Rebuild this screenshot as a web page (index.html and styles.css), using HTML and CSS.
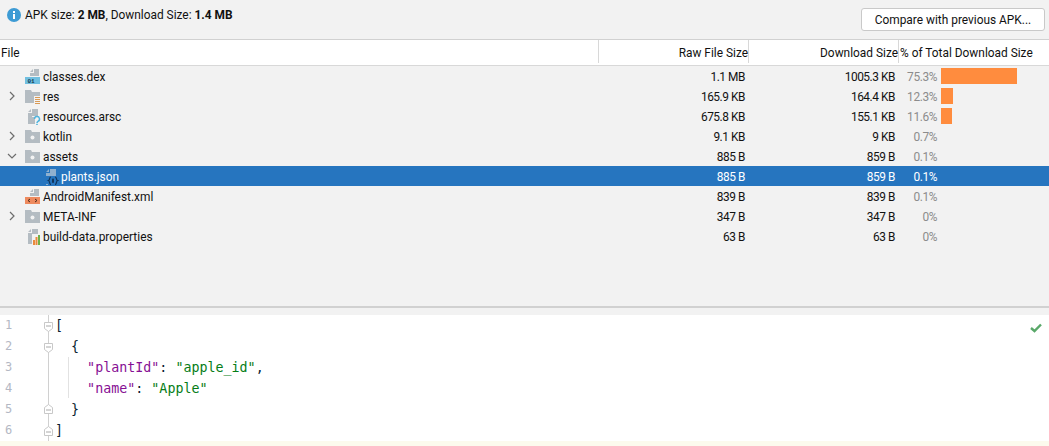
FILE: index.html
```html
<!DOCTYPE html>
<html lang="en">
<head>
<meta charset="utf-8">
<title>APK Analyzer</title>
<link rel="stylesheet" href="styles.css">
</head>
<body>
<svg class="defs" width="0" height="0">
  <defs>
    <g id="doc"><path d="M8 0v3H5zM9 0h5v7H9zM5 4h4v3H5z" fill="#b4bcc2"/></g>
    <g id="folder"><path d="M0 1h6l1 2h8v11H0z" fill="#b4bcc2"/></g>
    <symbol id="i-dex" viewBox="0 0 16 16"><use href="#doc"/><rect y="8" width="15" height="7" fill="#70bfe0"/><text x="2.500" y="14.300" class="glyph">01</text></symbol>
    <symbol id="i-res" viewBox="0 0 16 16"><use href="#folder"/><rect x="9" y="7" width="7" height="9" fill="#f2f2f2"/><path d="M10 8.500h5M10 10.500h5M10 12.500h5M10 14.500h5" stroke="#d99a55" stroke-width="1"/></symbol>
    <symbol id="i-arsc" viewBox="0 0 16 16"><path d="M6 0v3H3zM7 0h6v7H7zM3 4h4v4h3v7H3z" fill="#b4bcc2"/><path d="M9.500 10a2.500 2.500 0 1 1 3.500 2.300c-.8.400-1 .8-1 1.700" fill="none" stroke="#4fb3dd" stroke-width="1.500"/><rect x="11.200" y="14.800" width="1.600" height="1.600" fill="#4fb3dd"/></symbol>
    <symbol id="i-pkg" viewBox="0 0 16 16"><use href="#folder"/><circle cx="7.500" cy="8.500" r="2" fill="#f2f2f2"/></symbol>
    <symbol id="i-json" viewBox="0 0 16 16"><path d="M6 0v3H3zM7 0h6v7H7zM3 4h4v3H3v8h2v1H3z" fill="#8fb0cf"/><path d="M8 8c-2 0-1 3-2.500 3.500C7 12 6 15.500 8 15.500M12 8c2 0 1 3 2.500 3.500C13 12 14 15.500 12 15.500" fill="none" stroke="#11355c" stroke-width="1.200"/><rect x="9" y="9.500" width="2" height="4.500" rx="1" fill="#11355c"/></symbol>
    <symbol id="i-xml" viewBox="0 0 16 16"><use href="#doc"/><rect y="8" width="15" height="7" fill="#ee8a5e"/><path d="M5 10l-2 1.500L5 13M10 10l2 1.500L10 13" fill="none" stroke="#4a2a1a" stroke-width="1"/></symbol>
    <symbol id="i-props" viewBox="0 0 16 16"><path d="M6 0v3H3zM7 0h6v5H7zM3 4h4v11H3z" fill="#b4bcc2"/><rect x="8" y="11" width="2" height="5" fill="#ea8a3c"/><rect x="10.500" y="8" width="2" height="8" fill="#ea8a3c"/><rect x="13" y="6" width="2" height="10" fill="#6fb04a"/></symbol>
    <symbol id="i-closed" viewBox="0 0 10 10"><path d="M3 1l4 4-4 4" fill="none" stroke="#6e6e6e" stroke-width="1.200"/></symbol>
    <symbol id="i-open" viewBox="0 0 10 10"><path d="M1 3l4 4 4-4" fill="none" stroke="#6e6e6e" stroke-width="1.200"/></symbol>
    <symbol id="f-open" viewBox="0 0 9 10"><path d="M.5.500h8v6l-4 3-4-3z" fill="#fff" stroke="#c8c8c8"/><path d="M2 4h5" stroke="#aaa"/></symbol>
    <symbol id="f-close" viewBox="0 0 9 10"><path d="M.5 9.500h8v-6l-4-3-4 3z" fill="#fff" stroke="#c8c8c8"/><path d="M2 6h5" stroke="#aaa"/></symbol>
  </defs>
</svg>

<header class="toolbar">
  <div class="summary">
    <svg class="info" viewBox="0 0 14 14" width="14" height="14"><circle cx="7" cy="7" r="7" fill="#3d9bd4"/><rect x="6" y="6" width="2" height="5" fill="#fff"/><rect x="6" y="3" width="2" height="2" fill="#fff"/></svg>
    <span>APK size: <b>2 MB</b>, Download Size: <b>1.4 MB</b></span>
  </div>
  <button class="compare">Compare with previous APK...</button>
</header>

<section class="table">
  <div class="thead">
    <div class="th th-file">File</div>
    <div class="th th-num">Raw File Size</div>
    <div class="th th-num">Download Size</div>
    <div class="th th-total">% of Total Download Size</div>
  </div>
  <div class="tbody">
    <div class="row">
      <div class="name"><span class="arrow"></span><svg class="ico"><use href="#i-dex"/></svg>classes.dex</div>
      <div class="num">1.1 MB</div><div class="num">1005.3 KB</div>
      <div class="pct"><span class="pv">75.3%</span><span class="bar" style="width:76px"></span></div>
    </div>
    <div class="row">
      <div class="name"><svg class="arrow"><use href="#i-closed"/></svg><svg class="ico"><use href="#i-res"/></svg>res</div>
      <div class="num">165.9 KB</div><div class="num">164.4 KB</div>
      <div class="pct"><span class="pv">12.3%</span><span class="bar" style="width:12px"></span></div>
    </div>
    <div class="row">
      <div class="name"><span class="arrow"></span><svg class="ico"><use href="#i-arsc"/></svg>resources.arsc</div>
      <div class="num">675.8 KB</div><div class="num">155.1 KB</div>
      <div class="pct"><span class="pv">11.6%</span><span class="bar" style="width:11px"></span></div>
    </div>
    <div class="row">
      <div class="name"><svg class="arrow"><use href="#i-closed"/></svg><svg class="ico"><use href="#i-pkg"/></svg>kotlin</div>
      <div class="num">9.1 KB</div><div class="num">9 KB</div>
      <div class="pct"><span class="pv">0.7%</span></div>
    </div>
    <div class="row">
      <div class="name"><svg class="arrow"><use href="#i-open"/></svg><svg class="ico"><use href="#i-pkg"/></svg>assets</div>
      <div class="num">885 B</div><div class="num">859 B</div>
      <div class="pct"><span class="pv">0.1%</span></div>
    </div>
    <div class="row selected">
      <div class="name child"><span class="arrow"></span><svg class="ico"><use href="#i-json"/></svg>plants.json</div>
      <div class="num">885 B</div><div class="num">859 B</div>
      <div class="pct"><span class="pv">0.1%</span></div>
    </div>
    <div class="row">
      <div class="name"><span class="arrow"></span><svg class="ico"><use href="#i-xml"/></svg>AndroidManifest.xml</div>
      <div class="num">839 B</div><div class="num">839 B</div>
      <div class="pct"><span class="pv">0.1%</span></div>
    </div>
    <div class="row">
      <div class="name"><svg class="arrow"><use href="#i-closed"/></svg><svg class="ico"><use href="#i-pkg"/></svg>META-INF</div>
      <div class="num">347 B</div><div class="num">347 B</div>
      <div class="pct"><span class="pv">0%</span></div>
    </div>
    <div class="row">
      <div class="name"><span class="arrow"></span><svg class="ico"><use href="#i-props"/></svg>build-data.properties</div>
      <div class="num">63 B</div><div class="num">63 B</div>
      <div class="pct"><span class="pv">0%</span></div>
    </div>
  </div>
</section>

<div class="splitter"></div>

<section class="editor">
  <svg class="check" viewBox="0 0 12 10" width="12" height="10"><path d="M1 5l3.500 3L11 1.500" fill="none" stroke="#59a869" stroke-width="2.400"/></svg>
  <div class="guide"></div>
  <div class="line"><span class="ln">1</span><svg class="fold f1"><use href="#f-open"/></svg><code><i class="p">[</i></code></div>
  <div class="line"><span class="ln">2</span><svg class="fold f1"><use href="#f-open"/></svg><code>  <i class="p">{</i></code></div>
  <div class="line"><span class="ln">3</span><code>    <i class="k">"plantId"</i><i class="p">:</i> <i class="s">"apple_id"</i><i class="p">,</i></code></div>
  <div class="line"><span class="ln">4</span><code>    <i class="k">"name"</i><i class="p">:</i> <i class="s">"Apple"</i></code></div>
  <div class="line"><span class="ln">5</span><svg class="fold f2"><use href="#f-close"/></svg><code>  <i class="p">}</i></code></div>
  <div class="line"><span class="ln">6</span><svg class="fold f3"><use href="#f-close"/></svg><code><i class="p">]</i></code></div>
  <div class="line current"><span class="ln"></span><code></code></div>
</section>
</body>
</html>
```
FILE: styles.css
```css
* { box-sizing: border-box; }
html, body { height: 100%; }
body {
  margin: 0;
  height: 446px;
  overflow: hidden;
  background: #f2f2f2;
  color: #111;
  font-family: Roboto, "Liberation Sans", sans-serif;
  font-size: 11.9px;
  display: flex;
  flex-direction: column;
}
.defs { position: absolute; }
.glyph { font: bold 6px "Liberation Mono", monospace; fill: #14384f; }

.toolbar {
  height: 39px;
  flex: none;
  display: flex;
  justify-content: space-between;
  align-items: flex-start;
  padding: 7px 4px 0 7px;
}
.summary { display: flex; align-items: center; gap: 4px; height: 15px; }
.info { flex: none; }
.compare {
  height: 23px;
  width: 184px;
  margin-top: 1px;
  background: #fff;
  border: 1px solid #c9c9c9;
  border-radius: 3px;
  font: inherit;
  color: inherit;
  padding: 0;
}

.table { height: 267px; flex: none; border-top: 1px solid #d1d1d1; }
.thead, .row { display: grid; grid-template-columns: 599px 150px 150px 1fr; }
.thead { height: 26px; background: #fff; border-bottom: 1px solid #d8d8d8; }
.th { line-height: 27px; border-right: 1px solid #d8d8d8; height: 23px; }
.th-file { padding-left: 1px; }
.th-num { text-align: right; }
.th-total { border-right: 0; padding-left: 1px; }
.row { height: 20px; line-height: 22px; }
.name { display: flex; align-items: flex-start; padding-left: 7px; }
.name.child { padding-left: 25px; }
.arrow { width: 10px; height: 10px; flex: none; margin: 5px 8px 0 0; }
.ico { width: 16px; height: 16px; flex: none; margin: 3px 2px 0 0; }
.num { text-align: right; padding-right: 4px; letter-spacing: -0.45px; }
.pct { display: flex; align-items: flex-start; }
.pv { width: 38px; text-align: right; color: #8c8c8c; flex: none; letter-spacing: -0.4px; }
.bar { height: 16px; margin-left: 4px; margin-top: 2px; background: #ff8c3e; }
.row.selected { background: #2675bf; color: #fff; }
.row.selected .pv { color: #fff; }

.splitter { height: 9px; flex: none; border-top: 2px solid #d1d1d1; background: #f2f2f2; }

.editor {
  flex: 1;
  position: relative;
  background: #fff;
  overflow: hidden;
}
.editor::before {
  content: "";
  position: absolute;
  left: 48px; top: 0; bottom: 0;
  width: 1px;
  background: #d0d0d0;
}
.guide {
  position: absolute;
  left: 68px; top: 42px;
  width: 1px; height: 41px;
  background: #e2e2e2;
}
.check { position: absolute; right: 7px; top: 8px; }
.line {
  position: relative;
  height: 21px;
  display: flex;
  align-items: center;
}
.ln {
  width: 55px;
  flex: none;
  padding-left: 5px;
  color: #b4b8c4;
  font: 12px/21px "DejaVu Sans Mono", monospace;
}
code {
  font: 13.330px/21px "DejaVu Sans Mono", monospace;
  white-space: pre;
  color: #0b1f33;
}
code i { font-style: normal; }
.k { color: #871094; }
.s { color: #067d17; }
.p { color: #0b1f33; }
.fold { position: absolute; left: 44px; width: 9px; height: 10px; }
.f1 { top: 7px; }
.f2 { top: 5px; }
.f3 { top: 6px; }
.line.current { background: #fcfaed; }
```
